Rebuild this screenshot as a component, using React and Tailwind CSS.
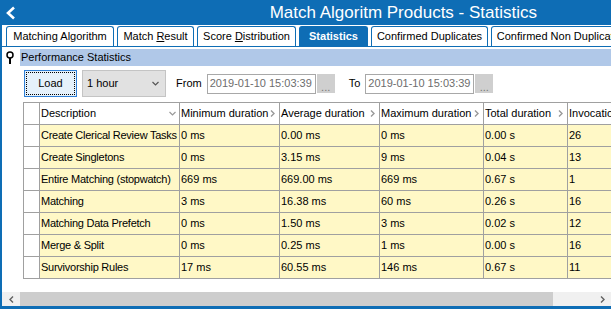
import { useState } from "react";

const tabs = [
  { label: "Matching Algorithm", w: "w-[108px]" },
  { label: "Match ", u: "R", rest: "esult", w: "w-[77px]" },
  { label: "Score ", u: "D", rest: "istribution", w: "w-[99px]" },
  { label: "Statistics", w: "w-[69px]", active: true },
  { label: "Confirmed Duplicates", w: "w-[117px]" },
  { label: "Confirmed Non Duplicates", w: "w-[140px]" },
];

const columns = [
  { label: "Description", sort: true },
  { label: "Minimum duration" },
  { label: "Average duration" },
  { label: "Maximum duration" },
  { label: "Total duration" },
  { label: "Invocations" },
];

const rows = [
  ["Create Clerical Review Tasks", "0 ms", "0.00 ms", "0 ms", "0.00 s", "26"],
  ["Create Singletons", "0 ms", "3.15 ms", "9 ms", "0.04 s", "13"],
  ["Entire Matching (stopwatch)", "669 ms", "669.00 ms", "669 ms", "0.67 s", "1"],
  ["Matching", "3 ms", "16.38 ms", "60 ms", "0.26 s", "16"],
  ["Matching Data Prefetch", "0 ms", "1.50 ms", "3 ms", "0.02 s", "12"],
  ["Merge & Split", "0 ms", "0.25 ms", "1 ms", "0.00 s", "16"],
  ["Survivorship Rules", "17 ms", "60.55 ms", "146 ms", "0.67 s", "11"],
];

const gridCols = "grid grid-cols-[16px_140px_100px_100px_104px_84px_90px]";

const Chevron = ({ dir = "right", className }) => (
  <svg width="7" height="7" viewBox="0 0 7 7" className={className}>
    {dir === "right" && <path d="M2 0.5 L5 3.5 L2 6.5" fill="none" stroke="currentColor" strokeWidth="1.4" />}
    {dir === "down" && <path d="M0.5 2 L3.5 5 L6.5 2" fill="none" stroke="currentColor" strokeWidth="1.2" />}
    {dir === "left" && <path d="M5 0.5 L2 3.5 L5 6.5" fill="none" stroke="currentColor" strokeWidth="1.4" />}
  </svg>
);

const App = () => {
  const [period] = useState("1 hour");

  return (
    <div className="w-[611px] h-[309px] overflow-hidden bg-white text-[11px] text-black font-['Liberation_Sans',Arial,sans-serif] flex flex-col">
      {/* Title bar */}
      <div className="h-[25px] shrink-0 bg-[#0e6db5] flex items-center text-white">
        <svg width="12" height="14" viewBox="0 0 12 14" className="ml-[5px]">
          <path d="M9 1.5 L3 7 L9 12.5" fill="none" stroke="white" strokeWidth="2.6" />
        </svg>
        <div className="ml-auto mr-[74px] text-[17px] leading-none">Match Algoritm Products - Statistics</div>
      </div>

      <div className="flex-1 flex flex-col border-l-2 border-b-[3px] border-[#0e6db5] min-h-0">
        {/* Tabs */}
        <div className="h-[21px] mt-[1px] shrink-0 flex gap-[3px] pl-[4px] border-b border-[#0e6db5] overflow-hidden">
          {tabs.map((t) => (
            <div
              key={t.label}
              className={`${t.w} shrink-0 h-[20px] rounded-t-[3px] border border-b-0 border-[#0e6db5] flex items-center justify-center whitespace-nowrap ${
                t.active ? "bg-[#0e6db5] text-white font-bold" : "bg-white"
              }`}
            >
              <span className="whitespace-pre">
                {t.label}
                {t.u && <span className="underline">{t.u}</span>}
                {t.rest}
              </span>
            </div>
          ))}
        </div>

        {/* Section header */}
        <div className="mt-[2px] h-[17px] shrink-0 flex items-center">
          <svg width="18" height="17" viewBox="0 0 18 17" className="shrink-0">
            <circle cx="8" cy="6" r="3" fill="none" stroke="black" strokeWidth="1.5" />
            <rect x="7" y="9" width="2" height="6" fill="black" />
          </svg>
          <div className="flex-1 h-full bg-[#b0c8e8] flex items-center pl-[1px]">Performance Statistics</div>
        </div>

        {/* Toolbar */}
        <div className="mt-[4px] h-[27px] shrink-0 flex items-center pl-[22px]">
          <button className="w-[53px] h-[27px] border border-[#2f7fd6] bg-[#e5f1fb] flex items-center justify-center">
            <span className="w-[49px] h-[23px] border border-dotted border-black flex items-center justify-center">Load</span>
          </button>
          <div className="ml-[5px] w-[84px] h-[27px] border border-[#c4c4c4] bg-[#e1e1e1] flex items-center pl-[4px] pr-[6px]">
            <span className="flex-1">{period}</span>
            <Chevron dir="down" className="text-[#555]" />
          </div>
          <span className="ml-[10px]">From</span>
          <div className="ml-[5px] w-[109px] h-[20px] border border-[#a8a8a8] flex items-center pl-[2px] text-[#6d6d6d] whitespace-nowrap">2019-01-10 15:03:39</div>
          <div className="ml-[1px] w-[18px] h-[19px] bg-[#cfcfcf] flex items-end justify-center text-[#777] leading-[12px]">...</div>
          <span className="ml-[14px]">To</span>
          <div className="ml-[5px] w-[109px] h-[20px] border border-[#a8a8a8] flex items-center pl-[2px] text-[#6d6d6d] whitespace-nowrap">2019-01-10 15:03:39</div>
          <div className="ml-[1px] w-[18px] h-[19px] bg-[#cfcfcf] flex items-end justify-center text-[#777] leading-[12px]">...</div>
        </div>

        {/* Grid */}
        <div className="mt-[5px] ml-[21px] overflow-hidden shrink-0">
          <div className="w-[700px] border-l border-t border-[#a0a0a0]">
            <div className={gridCols}>
              <div className="h-[22px] border-r border-b border-[#a0a0a0]" />
              {columns.map((c) => (
                <div key={c.label} className="h-[22px] border-r border-b border-[#a0a0a0] flex items-center pl-[1px] pr-[3px] whitespace-nowrap overflow-hidden">
                  <span className="flex-1">{c.label}</span>
                  {c.sort ? <Chevron dir="down" className="text-[#999]" /> : <Chevron className="text-[#999]" />}
                </div>
              ))}
            </div>
            {rows.map((r) => (
              <div key={r[0]} className={gridCols}>
                <div className="h-[22px] border-r border-b border-[#a0a0a0] bg-white" />
                {r.map((v, i) => (
                  <div
                    key={i}
                    className={`h-[22px] border-r border-b border-[#a0a0a0] bg-[#fff8c6] flex items-center pl-[1px] whitespace-nowrap overflow-hidden ${
                      i === 0 ? "tracking-[-0.25px]" : ""
                    }`}
                  >
                    {v}
                  </div>
                ))}
              </div>
            ))}
          </div>
        </div>

        {/* Horizontal scrollbar */}
        <div className="mt-auto h-[14px] shrink-0 flex bg-[#f0f0f0]">
          <div className="w-[18px] flex items-center justify-center text-[#606060]">
            <Chevron dir="left" />
          </div>
          <div className="w-[533px] bg-[#cdcdcd]" />
          <div className="flex-1 flex items-center justify-end pr-[5px] text-[#606060]">
            <Chevron />
          </div>
        </div>
      </div>
    </div>
  );
};

export default App;
